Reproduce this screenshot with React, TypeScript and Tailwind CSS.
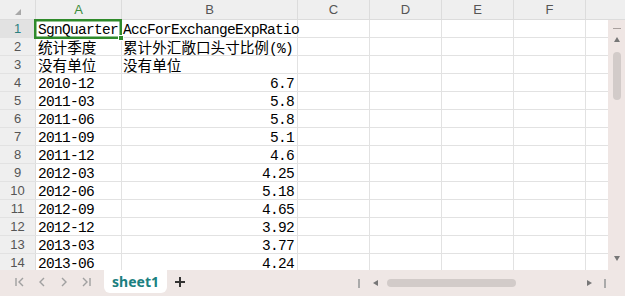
import React from "react";

const mono = '"Liberation Mono", "DejaVu Sans Mono", monospace';
const cjk = '"Noto Sans CJK SC", "Noto Sans", sans-serif';
const sans = '"Liberation Sans", Arial, sans-serif';

const rows: [string, string][] = [
  ["SgnQuarter", "AccForExchangeExpRatio"],
  ["统计季度", "累计外汇敞口头寸比例(%)"],
  ["没有单位", "没有单位"],
  ["2010-12", "6.7"],
  ["2011-03", "5.8"],
  ["2011-06", "5.8"],
  ["2011-09", "5.1"],
  ["2011-12", "4.6"],
  ["2012-03", "4.25"],
  ["2012-06", "5.18"],
  ["2012-09", "4.65"],
  ["2012-12", "3.92"],
  ["2013-03", "3.77"],
  ["2013-06", "4.24"],
];

function Txt({ s }: { s: string }) {
  const parts = s.match(/([\u4e00-\u9fff]+|[^\u4e00-\u9fff]+)/g) || [];
  return (
    <>
      {parts.map((p, i) =>
        /[\u4e00-\u9fff]/.test(p) ? (
          <span key={i} className="text-[14.6px] leading-[17px]" style={{ fontFamily: cjk }}>
            {p}
          </span>
        ) : (
          <span key={i} className="text-[14.5px] leading-[17px] tracking-[-0.7px]" style={{ fontFamily: mono }}>
            {p}
          </span>
        )
      )}
    </>
  );
}

const cols = [
  { l: "A", w: "w-[86px]" },
  { l: "B", w: "w-[176px]" },
  { l: "C", w: "w-[72px]" },
  { l: "D", w: "w-[72px]" },
  { l: "E", w: "w-[72px]" },
  { l: "F", w: "w-[72px]" },
];

export default function App() {
  return (
    <div className="relative w-[625px] h-[296px] overflow-hidden bg-white flex flex-col select-none">
      {/* column header */}
      <div
        className="flex h-[20px] shrink-0 bg-[#efefef] border-b border-[#dcdcdc] text-[13px] text-[#555]"
        style={{ fontFamily: sans }}
      >
        <div className="relative w-[36px] shrink-0 border-r border-[#dcdcdc]">
          <div className="absolute left-[15px] top-[9px] w-0 h-0 border-l-[6px] border-l-transparent border-b-[6px] border-b-[#a8a8a8]" />
        </div>
        {cols.map((c) => (
          <div
            key={c.l}
            className={`${c.w} shrink-0 border-r border-[#dcdcdc] flex items-center justify-center ${
              c.l === "A" ? "text-[#3c8c3a]" : ""
            }`}
          >
            {c.l}
          </div>
        ))}
        <div className="flex-1" />
      </div>

      {/* body */}
      <div className="flex h-[250px] shrink-0">
        <div className="relative flex-1 overflow-hidden">
          {rows.map((r, i) => (
            <div key={i} className="flex h-[18px] border-b border-[#e2e2e2] text-black leading-[17px]">
              <div
                className={`w-[36px] shrink-0 border-r border-[#dcdcdc] flex items-center justify-center text-[13px] ${
                  i === 0 ? "bg-[#e2e2e2] text-[#2a8080]" : "bg-[#efefef] text-[#555]"
                }`}
                style={{ fontFamily: sans }}
              >
                {i + 1}
              </div>
              <div className="w-[86px] shrink-0 border-r border-[#e2e2e2] pl-[2px] whitespace-nowrap overflow-visible">
                <Txt s={r[0]} />
              </div>
              <div
                className={`relative w-[176px] shrink-0 border-r border-[#e2e2e2] whitespace-nowrap ${
                  i >= 3 ? "text-right" : ""
                }`}
              >
                <div className="absolute inset-0 pl-[1px] pr-[3px]">
                  <Txt s={r[1]} />
                </div>
              </div>
              {[0, 1, 2, 3].map((k) => (
                <div key={k} className="w-[72px] shrink-0 border-r border-[#e2e2e2]" />
              ))}
              <div className="flex-1" />
            </div>
          ))}
        </div>

        {/* vertical scrollbar */}
        <div className="relative w-[17px] shrink-0 bg-[#efe6e4]">
          <div className="absolute left-[5px] top-[8px] w-[8px] h-[1px] bg-[#a9a09e]" />
          <div className="absolute left-[6px] top-[17px] w-0 h-0 border-l-[3.5px] border-l-transparent border-r-[3.5px] border-r-transparent border-b-[5px] border-b-[#777]" />
          <div className="absolute left-[5px] top-[32px] w-[8px] h-[48px] rounded-full bg-[#d2cbc9]" />
          <div className="absolute left-[6px] top-[236px] w-0 h-0 border-l-[3.5px] border-l-transparent border-r-[3.5px] border-r-transparent border-t-[5px] border-t-[#777]" />
        </div>
      </div>

      {/* selection overlay */}
      <div className="absolute z-10 left-[34px] top-[19px] w-[88px] h-[20px] shadow-[inset_0_0_0_2.5px_#2f8a2a] pointer-events-none" />
      <div className="absolute z-10 left-[118px] top-[35px] w-[6px] h-[6px] bg-[#2f8a2a] border border-white pointer-events-none" />

      {/* tab bar */}
      <div className="relative flex-1 bg-[#efe7e5] flex items-start">
        <div className="flex items-center h-[23px] pl-[14px] gap-0 text-[#a0a0a0]">
          <svg width="12" height="12" viewBox="0 0 12 12" className="mr-[10px]">
            <path d="M2 2v8M9 2L5 6l4 4" stroke="#a0a0a0" strokeWidth="1.4" fill="none" />
          </svg>
          <svg width="12" height="12" viewBox="0 0 12 12" className="mr-[10px]">
            <path d="M8 2L4 6l4 4" stroke="#a0a0a0" strokeWidth="1.4" fill="none" />
          </svg>
          <svg width="12" height="12" viewBox="0 0 12 12" className="mr-[10px]">
            <path d="M4 2l4 4-4 4" stroke="#a0a0a0" strokeWidth="1.4" fill="none" />
          </svg>
          <svg width="12" height="12" viewBox="0 0 12 12">
            <path d="M3 2l4 4-4 4M10 2v8" stroke="#a0a0a0" strokeWidth="1.4" fill="none" />
          </svg>
        </div>
        <div
          className="ml-[12px] w-[63px] h-[23px] bg-white rounded-b-[6px] flex items-center justify-center text-[14px] font-bold text-[#1b8080]"
          style={{ fontFamily: '"Noto Sans", "Open Sans", sans-serif' }}
        >
          sheet1
        </div>
        <div className="ml-[7px] h-[23px] flex items-center">
          <svg width="12" height="12" viewBox="0 0 12 12">
            <path d="M6 1v10M1 6h10" stroke="#333" strokeWidth="2" />
          </svg>
        </div>
        {/* horizontal scrollbar */}
        <div className="absolute left-[358px] top-[9px] w-[1.5px] h-[9px] bg-[#aaa]" />
        <div className="absolute left-[373px] top-[10px] w-0 h-0 border-t-[3.5px] border-t-transparent border-b-[3.5px] border-b-transparent border-r-[5px] border-r-[#777]" />
        <div className="absolute left-[387px] top-[9px] w-[129px] h-[8px] rounded-full bg-[#d2cbc9]" />
        <div className="absolute left-[587px] top-[10px] w-0 h-0 border-t-[3.5px] border-t-transparent border-b-[3.5px] border-b-transparent border-l-[5px] border-l-[#777]" />
        <div className="absolute left-[604px] top-[9px] w-[1.5px] h-[9px] bg-[#aaa]" />
      </div>
    </div>
  );
}
